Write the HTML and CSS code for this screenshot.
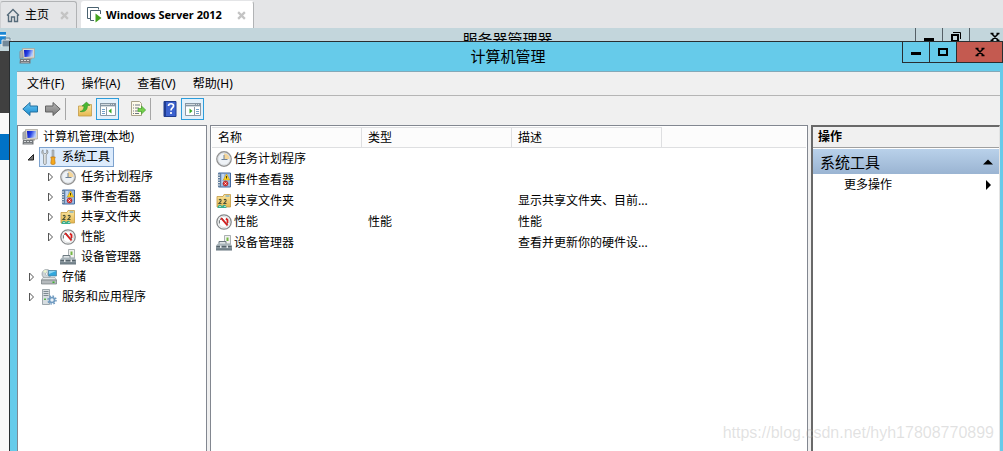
FILE: index.html
```
<!DOCTYPE html>
<html lang="zh-CN">
<head>
<meta charset="utf-8">
<title>计算机管理</title>
<link rel="stylesheet" href="styles.css">
</head>
<body>
<svg class="defs" aria-hidden="true">
  <defs>
    <linearGradient id="g-steel" x1="0" y1="0" x2="0" y2="1"><stop offset="0" stop-color="#b4bfc4"/><stop offset="1" stop-color="#65747d"/></linearGradient>
    <linearGradient id="g-blue" x1="0" y1="0" x2="0" y2="1"><stop offset="0" stop-color="#6cc8f4"/><stop offset="1" stop-color="#168bd0"/></linearGradient>
    <linearGradient id="g-gray" x1="0" y1="0" x2="0" y2="1"><stop offset="0" stop-color="#b5b5b5"/><stop offset="1" stop-color="#777"/></linearGradient>
    <linearGradient id="g-folder" x1="0" y1="0" x2="0" y2="1"><stop offset="0" stop-color="#fbe6a0"/><stop offset="1" stop-color="#e6b850"/></linearGradient>
    <linearGradient id="g-screen" x1="0" y1="0" x2="1" y2=".3"><stop offset="0" stop-color="#0a14c0"/><stop offset=".5" stop-color="#2a46e4"/><stop offset="1" stop-color="#b4cbfb"/></linearGradient>
  </defs>
  <symbol id="i-computer" viewBox="0 0 16 16">
    <path d="M.8 3.500L4 1.500v8.500L.8 10.500z" fill="#a9adb0" stroke="#7f8386" stroke-width=".5"/>
    <path d="M3.500.5h12v9.500l-11 .5z" fill="#dcd8cc" stroke="#a5a299" stroke-width=".7"/>
    <path d="M5 2h9v6.500l-8.500.5z" fill="url(#g-screen)"/>
    <path d="M8 10h5v1.500H8z" fill="#a8a59c"/>
    <path d="M1 11h10.500v4.500H.5z" fill="#74787c"/>
    <path d="M2 12.500h2m1 0h2m1 0h2" stroke="#d5d8da"/>
    <path d="M2 14.500h8" stroke="#a9adb0" stroke-width=".8"/>
  </symbol>
  <symbol id="i-tools" viewBox="0 0 16 16">
    <path d="M2 .8C.3 2 .4 4.800 2.600 5.800V14.500c0 1.300 2.600 1.300 2.600 0V5.800C7.300 4.800 7.400 2 5.800.8v3l-1.900 1L2 3.800z" fill="#e6e8e9" stroke="#7e8588" stroke-width=".8"/>
    <path d="M11 1h2v7h-2z" fill="#b5bcc0" stroke="#80878b" stroke-width=".5"/>
    <path d="M9.800 8h4.400l-.6 2 .6 4.500c-.8 1.300-3.600 1.300-4.400 0l.6-4.500z" fill="#f4a91e" stroke="#bd7612" stroke-width=".7"/>
  </symbol>
  <symbol id="i-clock" viewBox="0 0 16 16">
    <circle cx="8" cy="8" r="7.200" fill="#eef2f6" stroke="#949494" stroke-width="1.400"/>
    <path d="M8 8V2.300A5.700 5.700 0 0 1 13.700 8z" fill="#f5d69a"/>
    <circle cx="8" cy="8" r="6" fill="none" stroke="#d3d6d8" stroke-width=".7"/>
    <path d="M8 4v4.500h3.500M5.500 8.500H8" fill="none" stroke="#6f8297"/>
  </symbol>
  <symbol id="i-event" viewBox="0 0 16 16">
    <path d="M2.500 1h12v14h-12z" fill="#9cbbe3" stroke="#456aa0"/>
    <path d="M2 1h3v14H2z" fill="#617f9f"/>
    <path d="M1 3h3M1 5.500h3M1 8h3M1 10.500h3M1 13h3" stroke="#e6e9ec"/>
    <path d="M6 3h2M6 5h2M6 7h2M6 10h2" stroke="#fff" stroke-width=".8"/>
    <path d="M10.500 2l3.200 6H7.300z" fill="#ffd51f" stroke="#c79710" stroke-width=".6"/>
    <path d="M10.500 4v2.500" stroke="#4c3c00"/>
    <circle cx="9.500" cy="11.500" r="2.500" fill="#d93030" stroke="#a01515" stroke-width=".5"/>
    <path d="M8.500 10.500l2 2m0-2l-2 2" stroke="#fff" stroke-width=".8"/>
  </symbol>
  <symbol id="i-share" viewBox="0 0 16 16">
    <path d="M1 3.500h6l1-2h6.500V14H1z" fill="url(#g-folder)" stroke="#c49a42" stroke-width=".8"/>
    <path d="M9.500 3h4" stroke="#4c9bdc"/>
    <path d="M3 7c1-1 2.500-.5 2 1l-2 2.500h2.500M8 7c1-1 2.500-.5 2 1l-2 2.500h2.500" fill="none" stroke="#4b5238" stroke-width="1.200"/>
    <path d="M1.500 15c.3-4 4.200-4 4.500-1 .7-3.500 4.500-3 4.500 1z" fill="#37ad8e"/>
    <path d="M3 13l1 1 1-1m3 0l1 1 1-1" fill="none" stroke="#dff5e9" stroke-width=".7"/>
  </symbol>
  <symbol id="i-perf" viewBox="0 0 16 16">
    <circle cx="8" cy="8" r="7.200" fill="#fff" stroke="#85898b" stroke-width="1.300"/>
    <circle cx="8" cy="8" r="5.500" fill="none" stroke="#bfc4c6" stroke-width=".6"/>
    <path d="M3.500 9.500V6.500L6 4l5.500 6.500V5.500" fill="none" stroke="#6b7073" stroke-width=".9"/>
    <path d="M5 4l6.500 7.500M10 4.500l1.500 1.500v3" fill="none" stroke="#d81e1e" stroke-width="1.800"/>
  </symbol>
  <symbol id="i-device" viewBox="0 0 16 16">
    <path d="M8.500.5h6V9h-6z" fill="#f0f1ef" stroke="#969d9f" stroke-width=".8"/>
    <path d="M10.500 2.500h2V6h-2z" fill="#74b743"/>
    <path d="M3 9V6.500h7V9" fill="#dfe4e6" stroke="#6d7a81"/>
    <path d="M0 10.500l2-2h12l2 2V15.500H0z" fill="url(#g-steel)"/>
    <path d="M.5 11.500h15" stroke="#56636b"/>
    <path d="M4 10.500h1.500V13H4zM10.500 10.500H12V13h-1.500z" fill="#e4e8ea"/>
  </symbol>
  <symbol id="i-storage" viewBox="0 0 16 16">
    <circle cx="5.500" cy="5" r="4.500" fill="#cdd4d7" stroke="#8a9499" stroke-width=".7"/>
    <path d="M5.500 5L2 2.300A4.500 4.500 0 0 1 5.500.7z" fill="#eaf5ce"/>
    <circle cx="5.500" cy="5" r="1.200" fill="#fff" stroke="#8a9499" stroke-width=".5"/>
    <path d="M7.500 1.500h8V7h-8z" fill="#31a7dc" stroke="#4d7e98" stroke-width=".7"/>
    <path d="M8 2h7L8 5z" fill="#8fd8f4"/>
    <path d="M2 8.500h12l1.500 2.500H.5z" fill="#e4e7e8" stroke="#92989b" stroke-width=".6"/>
    <path d="M.5 11h15v4H.5z" fill="#b5babd" stroke="#70787c" stroke-width=".7"/>
    <path d="M11.500 12.500h2V14h-2z" fill="#3db52c"/>
  </symbol>
  <symbol id="i-services" viewBox="0 0 16 16">
    <path d="M1.500.5h7v15h-7z" fill="#d7dde0" stroke="#89949a" stroke-width=".8"/>
    <path d="M2.500 2.500h5M2.500 4.500h5M2.500 6.500h5" stroke="#7e8b92"/>
    <path d="M3 9.500h2V11H3z" fill="#58b44b"/>
    <circle cx="11" cy="11" r="4" fill="none" stroke="#6f9ac0" stroke-width="1.500" stroke-dasharray="1.600 1.540"/>
    <circle cx="11" cy="11" r="2.500" fill="#e9f1f7" stroke="#6f9ac0" stroke-width="1.600"/>
  </symbol>
  <symbol id="i-pane" viewBox="0 0 16 14">
    <path d="M.5 1.500h15v12H.5z" fill="#fff" stroke="#8d99a4"/>
    <path d="M0 1h16v4H0z" fill="#8796a3"/>
    <path d="M1 2.500h9m1 0h1m1 0h1M1 4.500h14" stroke="#e6ebef" stroke-width=".8"/>
  </symbol>
</svg>

<nav class="tabs">
  <div class="tab tab-home">
    <svg class="icon" viewBox="0 0 16 16"><path d="M1 8.500L7 2.500l6 6M2.500 8v6.500h3V10h3v4.500h3V8" fill="none" stroke="#566b7a" stroke-width="1.400"/></svg>
    <a href="#home">主页</a>
    <button class="close" aria-label="关闭主页"><svg viewBox="0 0 8 8"><path d="M1 1l6 6M7 1L1 7" stroke="#c4c4c4" stroke-width="2"/></svg></button>
  </div>
  <div class="tab tab-active">
    <svg class="icon" viewBox="0 0 16 16"><path d="M3.500 11.500h-3v-11h11v2" fill="none" stroke="#4a6270"/><path d="M7 13.500H3.500v-10h10V7" fill="none" stroke="#4a6270"/><path d="M8.500 6.500l6 4.500-6 4.500z" fill="#43a21c"/></svg>
    <a href="#server">Windows Server 2012</a>
    <button class="close" aria-label="关闭 Windows Server 2012"><svg viewBox="0 0 8 8"><path d="M1 1l6 6M7 1L1 7" stroke="#c4c4c4" stroke-width="2"/></svg></button>
  </div>
</nav>

<main class="desktop">
  <section class="back">
    <header class="back-title">
      <svg class="back-icon" viewBox="0 0 14 16"><path d="M0 1h6v12H0z" fill="#1b86d3"/><path d="M0 4.500h6" stroke="#fff" stroke-width="1.500"/><path d="M2 9h10v7H2z" fill="#73899a" stroke="#e7eef1"/><path d="M5 9V7h5v2" fill="none" stroke="#73899a"/></svg>
      <span>服务器管理器</span>
      <div class="back-controls">
        <button aria-label="最小化"><svg viewBox="0 0 12 12"><path d="M1 7h10v3H1z"/></svg></button>
        <button aria-label="还原"><svg viewBox="0 0 12 12"><path d="M2 4h6v6H2z" fill="none" stroke="#000" stroke-width="2"/><path d="M3 1.500h7.500V8" fill="none" stroke="#000"/></svg></button>
        <button aria-label="关闭"><svg viewBox="0 0 12 12"><path d="M2.500 2.500l7 7m0-7l-7 7M1.500 2.500h3m3 0h3M1.500 9.500h3m3 0h3" stroke="#000" stroke-width="1.500"/></svg></button>
      </div>
    </header>
    <div class="back-nav"></div>
    <div class="back-gap"></div>
    <div class="back-selected"></div>
  </section>

  <section class="window">
    <header class="titlebar">
      <svg class="icon"><use href="#i-computer"/></svg>
      <h1>计算机管理</h1>
      <div class="controls">
        <button class="min" aria-label="最小化"><svg viewBox="0 0 12 12"><path d="M1 6h10v3H1z"/></svg></button>
        <button class="max" aria-label="最大化"><svg viewBox="0 0 12 12"><path d="M2 3h8v6H2z" fill="none" stroke="#000" stroke-width="2"/></svg></button>
        <button class="exit" aria-label="关闭"><svg viewBox="0 0 12 12"><path d="M2.500 2.500l7 7m0-7l-7 7M1.500 2.500h3m3 0h3M1.500 9.500h3m3 0h3" stroke="#000" stroke-width="1.500"/></svg></button>
      </div>
    </header>

    <div class="client">
      <nav class="menu">
        <button>文件(F)</button><button>操作(A)</button><button>查看(V)</button><button>帮助(H)</button>
      </nav>
      <div class="toolbar">
        <button aria-label="后退"><svg class="icon" viewBox="0 0 16 16"><path d="M.8 8L8 1.500V5h7.500v6H8v3.500z" fill="url(#g-blue)" stroke="#24709f"/></svg></button>
        <button aria-label="前进"><svg class="icon" viewBox="0 0 16 16"><path d="M15.200 8L8 1.500V5H.5v6H8v3.500z" fill="url(#g-gray)" stroke="#636363"/></svg></button>
        <i class="sep"></i>
        <button aria-label="上移一级"><svg class="icon" viewBox="0 0 16 16"><path d="M1.500 5H8l1-1.500h5.500V15h-13z" fill="url(#g-folder)" stroke="#c39a48" stroke-width=".8"/><path d="M3 10.500c3-.5 4-2.500 4-5.500H5l4.500-4L13 4.500h-2.500c0 4.500-2.500 7-7.500 6z" fill="#48b733" stroke="#2e8a20" stroke-width=".5"/></svg></button>
        <button class="on" aria-label="显示控制台树"><svg class="pane" viewBox="0 0 16 14"><use href="#i-pane"/><path d="M6.500 5v8.500" stroke="#8d99a4"/><path d="M2 7.500h3M2 9.500h3M2 11.500h3" stroke="#72a0c9"/><path d="M11.500 6.500v5L8.500 9z" fill="#38aa28"/></svg></button>
        <button class="after" aria-label="导出列表"><svg class="icon" viewBox="0 0 16 16"><path d="M1.500.5h8l2 2v12h-10z" fill="#fffbea" stroke="#aaa38b"/><path d="M3 4h1m1 0h5M3 7h1m1 0h4M3 10h1m1 0h3M3 12.500h1m1 0h4" stroke="#707784"/><path d="M8 7.500h3.500V5l4.200 4-4.200 4v-2.500H8z" fill="#74cf4a" stroke="#3b9c27" stroke-width=".6"/></svg></button>
        <i class="sep"></i>
        <button aria-label="帮助"><svg class="icon" viewBox="0 0 16 16"><path d="M2 .5h12v15H2z" fill="#3d62cf" stroke="#203d91"/><path d="M2 1h2v14H2z" fill="#203d91"/><path d="M6.500 5c0-3 5.500-3 5 0 0 2-2.500 2-2.500 4.500M9 11v2" fill="none" stroke="#fff" stroke-width="1.700"/></svg></button>
        <button class="on" aria-label="显示操作窗格"><svg class="pane" viewBox="0 0 16 14"><use href="#i-pane"/><path d="M9.500 5v8.500" stroke="#8d99a4"/><path d="M11 7.500h3M11 9.500h3M11 11.500h3" stroke="#72a0c9"/><path d="M4.500 6.500v5l3-2.500z" fill="#38aa28"/></svg></button>
      </div>

      <div class="panels">
        <aside class="tree">
          <ul>
            <li class="l0"><svg class="icon"><use href="#i-computer"/></svg><span>计算机管理(本地)</span></li>
            <li class="l1"><button class="exp" aria-label="折叠"><svg viewBox="0 0 8 10"><path d="M6.500 2.500V8H1z" fill="#777" stroke="#222"/></svg></button><a class="node selected" href="#tools"><svg class="icon"><use href="#i-tools"/></svg>系统工具</a></li>
            <li class="l2"><button class="exp" aria-label="展开"><svg viewBox="0 0 8 10"><path d="M2.500 1l4 4-4 4z" fill="#fff" stroke="#555"/></svg></button><a class="node" href="#tasks"><svg class="icon"><use href="#i-clock"/></svg>任务计划程序</a></li>
            <li class="l2"><button class="exp" aria-label="展开"><svg viewBox="0 0 8 10"><path d="M2.500 1l4 4-4 4z" fill="#fff" stroke="#555"/></svg></button><a class="node" href="#events"><svg class="icon"><use href="#i-event"/></svg>事件查看器</a></li>
            <li class="l2"><button class="exp" aria-label="展开"><svg viewBox="0 0 8 10"><path d="M2.500 1l4 4-4 4z" fill="#fff" stroke="#555"/></svg></button><a class="node" href="#shares"><svg class="icon"><use href="#i-share"/></svg>共享文件夹</a></li>
            <li class="l2"><button class="exp" aria-label="展开"><svg viewBox="0 0 8 10"><path d="M2.500 1l4 4-4 4z" fill="#fff" stroke="#555"/></svg></button><a class="node" href="#perf"><svg class="icon"><use href="#i-perf"/></svg>性能</a></li>
            <li class="l2"><i class="exp"></i><a class="node" href="#devices"><svg class="icon"><use href="#i-device"/></svg>设备管理器</a></li>
            <li class="l1"><button class="exp" aria-label="展开"><svg viewBox="0 0 8 10"><path d="M2.500 1l4 4-4 4z" fill="#fff" stroke="#555"/></svg></button><a class="node" href="#storage"><svg class="icon"><use href="#i-storage"/></svg>存储</a></li>
            <li class="l1"><button class="exp" aria-label="展开"><svg viewBox="0 0 8 10"><path d="M2.500 1l4 4-4 4z" fill="#fff" stroke="#555"/></svg></button><a class="node" href="#services"><svg class="icon"><use href="#i-services"/></svg>服务和应用程序</a></li>
          </ul>
        </aside>

        <div class="list">
          <table>
            <colgroup><col class="col"><col class="col"><col class="col"><col></colgroup>
            <thead><tr><th>名称</th><th>类型</th><th>描述</th><th class="rest"></th></tr></thead>
            <tbody>
              <tr><td><span class="name"><svg class="icon"><use href="#i-clock"/></svg>任务计划程序</span></td><td></td><td></td><td></td></tr>
              <tr><td><span class="name"><svg class="icon"><use href="#i-event"/></svg>事件查看器</span></td><td></td><td></td><td></td></tr>
              <tr><td><span class="name"><svg class="icon"><use href="#i-share"/></svg>共享文件夹</span></td><td></td><td>显示共享文件夹、目前...</td><td></td></tr>
              <tr><td><span class="name"><svg class="icon"><use href="#i-perf"/></svg>性能</span></td><td>性能</td><td>性能</td><td></td></tr>
              <tr><td><span class="name"><svg class="icon"><use href="#i-device"/></svg>设备管理器</span></td><td></td><td>查看并更新你的硬件设...</td><td></td></tr>
            </tbody>
          </table>
        </div>

        <aside class="actions">
          <h2>操作</h2>
          <button class="group"><span>系统工具</span><svg viewBox="0 0 10 10"><path d="M0 7.500L5 2.500l5 5z"/></svg></button>
          <button class="more"><span>更多操作</span><svg viewBox="0 0 10 10"><path d="M3 0l5 5-5 5z"/></svg></button>
        </aside>
      </div>
    </div>
  </section>
  <p class="watermark">https://blog.csdn.net/hyh17808770899</p>
</main>
</body>
</html>
```
FILE: styles.css
```
* { box-sizing: border-box; }

html, body { height: 100%; }

body {
  margin: 0;
  display: flex;
  flex-direction: column;
  overflow: hidden;
  background: #e4e5e7;
  color: #000;
  font: 12px/20px "Noto Sans", "Noto Sans CJK SC", sans-serif;
}

button {
  margin: 0;
  padding: 0;
  border: 0;
  background: none;
  color: inherit;
  font: inherit;
}

a { color: inherit; text-decoration: none; }
h1, h2, p, ul { margin: 0; padding: 0; }
svg { display: block; flex: none; }
.defs { position: absolute; width: 0; height: 0; }
.icon { width: 16px; height: 16px; }

/* Console tabs */
.tabs {
  display: flex;
  gap: 4px;
  height: 28px;
  padding-top: 1px;
}
.tab {
  display: flex;
  align-items: center;
  gap: 3px;
  padding: 0 7px 0 5px;
  border: 1px solid #b1b3b5;
  border-bottom: 0;
  border-radius: 3px 3px 0 0;
  white-space: nowrap;
}
.tab-home { width: 77px; border-left-color: #d0d1d3; }
.tab-active {
  width: 173px;
  background: #fff;
  border-color: #fff #b1b3b5 #fff #fff;
  font-size: 11px;
  font-weight: 700;
}
.close { margin-left: auto; }
.close svg { width: 9px; height: 9px; }

/* Remote desktop */
.desktop {
  position: relative;
  flex: 1;
  min-height: 0;
  overflow: hidden;
}
.back {
  display: flex;
  flex-direction: column;
  height: 100%;
  background: #f8f8f8;
}
.back-title {
  display: flex;
  height: 23px;
  background: #c3d6dc;
  font-size: 15px;
}
.back-title > span { flex: 1; padding-left: 86px; text-align: center; line-height: 22px; }
.back-icon { width: 14px; height: 16px; margin-top: 3px; }
.back-controls { display: flex; }
.back-controls button {
  display: flex;
  justify-content: center;
  width: 27px;
  border-left: 1px solid #555f66;
}
.back-controls button:last-child { width: 34px; justify-content: flex-end; padding-right: 2px; }
.back-controls svg { width: 12px; height: 12px; margin-top: 3px; }
.back-nav { height: 62px; background: #404040; }
.back-gap { height: 21px; }
.back-selected { height: 26px; background: #0072c6; }

/* Management window */
.window {
  position: absolute;
  inset: 13px 0 0 9px;
  display: flex;
  flex-direction: column;
  background: #66cbea;
  border: solid #292e31;
  border-width: 1px 0 0 1px;
}
.titlebar {
  display: flex;
  align-items: flex-start;
  height: 29px;
  padding-left: 9px;
}
.titlebar > .icon { margin-top: 6px; }
.titlebar h1 {
  flex: 1;
  padding-left: 79px;
  font-size: 15px;
  font-weight: 400;
  line-height: 29px;
  text-align: center;
}
.controls {
  display: flex;
  height: 21px;
  border: solid #292e31;
  border-width: 0 1px 1px;
}
.controls button {
  display: grid;
  place-items: center;
  width: 27px;
  border-right: 1px solid #292e31;
}
.controls .exit { width: 45px; border: 0; background: #c45a50; }
.controls svg { width: 12px; height: 12px; }

.client {
  flex: 1;
  min-height: 0;
  display: flex;
  flex-direction: column;
  margin: 0 3px 0 7px;
  background: #f0f0f0;
  border-top: 1px solid #84a9b8;
}
.menu {
  display: flex;
  gap: 17px;
  height: 24px;
  padding-left: 10px;
  border-bottom: 1px solid #b5b5b5;
}
.toolbar {
  display: flex;
  align-items: center;
  height: 29px;
  padding: 0 0 4px 1px;
}
.toolbar button {
  display: grid;
  place-items: center;
  width: 23px;
  height: 22px;
}
.toolbar .on { border: 1px solid #2d9ddb; background: #e3f0fa; }
.toolbar .after { margin-left: 7px; }
.sep { width: 1px; height: 22px; margin: 0 7px 0 1px; background: #a6a6a6; }
.pane { width: 16px; height: 14px; }

.panels {
  flex: 1;
  min-height: 0;
  display: grid;
  grid-template-columns: 190px minmax(0, 1fr) 189px;
  gap: 3px;
}
.tree, .list {
  background: #fff;
  border: 1px solid #828790;
  border-bottom: 0;
}

.tree ul { list-style: none; padding-top: 1px; }
.tree li {
  display: flex;
  align-items: center;
  height: 20px;
  white-space: nowrap;
}
.l0 { gap: 5px; padding-left: 4px; }
.l1 { padding-left: 9px; }
.l2 { padding-left: 28px; }
.exp { width: 8px; margin-right: 4px; }
.exp svg { width: 8px; height: 10px; }
.node {
  display: flex;
  align-items: center;
  gap: 5px;
  height: 20px;
  padding: 0 3px 0 1px;
  border: 1px solid transparent;
}
.selected { background: #dcebfc; border-color: #7da2ce; }

.list { padding: 1px; }
.list table {
  width: 100%;
  table-layout: fixed;
  border-collapse: separate;
  border-spacing: 0;
}
.col { width: 150px; }
.list th {
  height: 21px;
  padding: 0 6px;
  background: #fcfcfc;
  border: solid #dedfe1;
  border-width: 1px 1px 1px 0;
  font-weight: 400;
  line-height: 18px;
  text-align: left;
}
.list .rest { border-right: 0; border-top-color: #fcfcfc; }
.list td {
  height: 21px;
  padding: 0 0 0 6px;
  white-space: nowrap;
}
.list td:first-child { padding-left: 4px; }
.name { display: flex; align-items: center; gap: 2px; }

.actions {
  background: #fff;
  border: solid #696969;
  border-width: 2px 1px 0 2px;
  border-right-color: #e3e3e3;
}
.actions h2 {
  height: 21px;
  padding-left: 5px;
  background: #f0f0f0;
  border-bottom: 1px solid #a0a0a0;
  font-size: 12px;
  line-height: 20px;
}
.actions button {
  display: flex;
  align-items: center;
  justify-content: space-between;
  width: 100%;
  padding-right: 6px;
}
.actions svg { width: 10px; height: 10px; }
.group {
  height: 26px;
  padding-left: 7px;
  border-top: 1px solid #fff;
  background: linear-gradient(#b9d1ea, #9ab4d2);
  font-size: 15px;
}
.more { height: 22px; padding-left: 31px; }

.watermark {
  position: absolute;
  right: 9px;
  bottom: 8px;
  color: rgba(170, 170, 170, 0.35);
  font: 16px/20px "Liberation Sans", Arial, sans-serif;
}
```
